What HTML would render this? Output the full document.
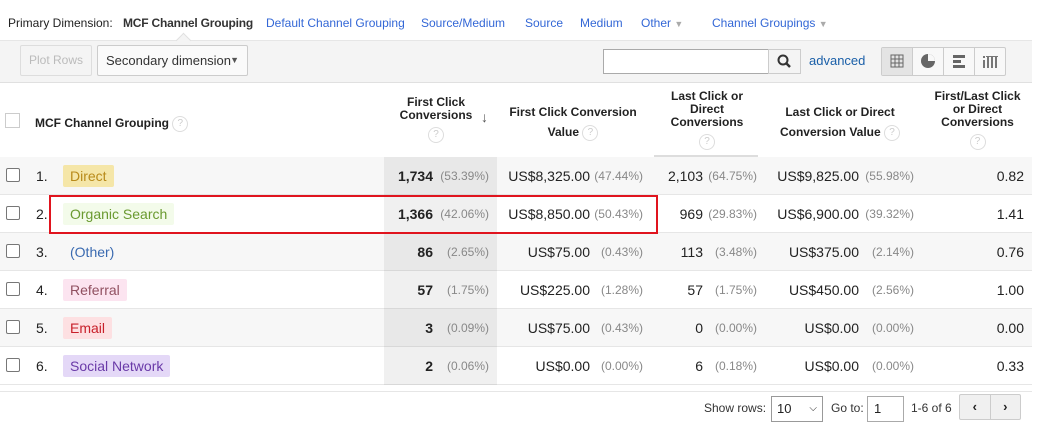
<!DOCTYPE html>
<html><head><style>
body{margin:0;width:1037px;height:422px;background:#fff;font-family:"Liberation Sans",Arial,sans-serif;position:relative;overflow:hidden;color:#222}
.a{position:absolute;white-space:nowrap}
.lnk{color:#3367d6;font-size:12px}
.hd{font-weight:bold;font-size:12px;text-align:center;color:#222;line-height:13px}
.q{display:inline-block;width:14px;height:14px;border:1px solid #ddd;border-radius:50%;color:#ccc;font-size:10px;line-height:14px;text-align:center;font-weight:normal;vertical-align:middle}
.row{position:absolute;left:0;width:1032px;height:37px;border-bottom:1px solid #e6e6e6}
.cb{position:absolute;left:6px;top:11px;width:12px;height:12px;border:1px solid #777;border-radius:2px;background:#fff}
.n{position:absolute;left:36px;top:11px;font-size:14px;color:#222}
.chip{position:absolute;left:63px;top:8px;height:22px;line-height:22px;padding:0 7px;font-size:14px;border-radius:2px}
.v{position:absolute;top:11px;font-size:14px;color:#222}
.p{position:absolute;top:12px;font-size:12px;color:#888}
.b{font-weight:bold}
</style></head><body>
<div class="a" style="left:8px;top:16px;font-size:12px;color:#222">Primary Dimension:</div>
<div class="a" style="left:123px;top:16px;font-size:12px;font-weight:bold;color:#333;letter-spacing:-0.2px">MCF Channel Grouping</div>
<div class="a lnk" style="left:266px;top:16px">Default Channel Grouping</div>
<div class="a lnk" style="left:421px;top:16px">Source/Medium</div>
<div class="a lnk" style="left:525px;top:16px">Source</div>
<div class="a lnk" style="left:580px;top:16px">Medium</div>
<div class="a lnk" style="left:641px;top:16px">Other <span style="color:#aaa;font-size:9px">▼</span></div>
<div class="a lnk" style="left:712px;top:16px">Channel Groupings <span style="color:#aaa;font-size:9px">▼</span></div>
<div class="a" style="left:0;top:40px;width:1032px;height:41px;background:#f4f4f4;border-top:1px solid #e6e6e6;border-bottom:1px solid #e0e0e0"></div>
<div class="a" style="left:178px;top:35px;width:10px;height:10px;background:#f4f4f4;border-left:1px solid #e0e0e0;border-top:1px solid #e0e0e0;transform:rotate(45deg)"></div>
<div class="a" style="left:20px;top:45px;width:70px;height:29px;border:1px solid #ddd;border-radius:2px;color:#bbb;font-size:12px;line-height:29px;text-align:center">Plot Rows</div>
<div class="a" style="left:97px;top:45px;width:151px;height:31px;border:1px solid #ccc;border-radius:2px;background:#fafafa;font-size:13px;line-height:29px;color:#333;padding-left:8px;box-sizing:border-box">Secondary dimension<span style="position:absolute;right:8px;color:#555;font-size:9px">▼</span></div>
<div class="a" style="left:603px;top:49px;width:166px;height:23px;border:1px solid #aaa;background:#fff"></div>
<div class="a" style="left:768px;top:49px;width:31px;height:23px;border:1px solid #ccc;background:#f4f4f4"><svg width="31" height="23"><circle cx="14" cy="10" r="4.5" fill="none" stroke="#333" stroke-width="2"/><line x1="17" y1="13" x2="21" y2="17" stroke="#333" stroke-width="2.5"/></svg></div>
<div class="a" style="left:809px;top:53px;font-size:13px;color:#1a5fa8">advanced</div>
<div class="a" style="left:881px;top:47px;width:123px;height:27px;border:1px solid #ccc;border-radius:2px;background:#f8f8f8;display:flex">
<div style="width:30px;background:#e4e4e4;border-right:1px solid #ccc"><svg width="30" height="27"><g stroke="#666" fill="none"><rect x="9" y="7" width="12" height="12"/><path d="M13 7v12M17 7v12M9 11h12M9 15h12"/></g></svg></div>
<div style="width:30px;border-right:1px solid #ccc"><svg width="30" height="27"><circle cx="15" cy="13" r="7" fill="#666"/><path d="M15 13V6a7 7 0 0 1 7 7z" fill="#f8f8f8"/></svg></div>
<div style="width:30px;border-right:1px solid #ccc"><svg width="30" height="27"><g fill="#666"><rect x="9" y="7" width="12" height="3"/><rect x="9" y="12" width="8" height="3"/><rect x="9" y="17" width="12" height="3"/></g></svg></div>
<div style="width:30px"><svg width="30" height="27"><g fill="#777"><rect x="8" y="8" width="2" height="2"/><rect x="8" y="12" width="2" height="8"/><rect x="12" y="8" width="2" height="12"/><rect x="16" y="8" width="2" height="12"/><rect x="20" y="8" width="2" height="12"/><rect x="11" y="8" width="12" height="1"/></g></svg></div>
</div>
<div class="a" style="left:0;top:82px;width:1032px;height:75px;border-bottom:1px solid #ddd"></div>
<div class="a" style="left:5px;top:113px;width:13px;height:13px;border:1px solid #ccc;background:#fff"></div>
<div class="a hd" style="left:35px;top:116px">MCF Channel Grouping <span class="q">?</span></div>
<div class="a hd" style="left:396px;top:96px;width:80px">First Click<br>Conversions<br><span class="q" style="margin-top:5px">?</span></div>
<div class="a" style="left:481px;top:109px;font-size:14px;color:#555;font-weight:bold">↓</div>
<div class="a hd" style="left:503px;top:102px;width:140px;line-height:20px">First Click Conversion<br>Value <span class="q">?</span></div>
<div class="a hd" style="left:655px;top:90px;width:104px">Last Click or<br>Direct<br>Conversions<br><span class="q" style="margin-top:5px">?</span></div>
<div class="a" style="left:654px;top:155px;width:104px;height:2px;background:#ddd"></div>
<div class="a hd" style="left:770px;top:102px;width:140px;line-height:20px">Last Click or Direct<br>Conversion Value <span class="q">?</span></div>
<div class="a hd" style="left:925px;top:90px;width:105px">First/Last Click<br>or Direct<br>Conversions<br><span class="q" style="margin-top:5px">?</span></div>

<div class="row" style="top:157px;background:#f7f7f7"><div class="cb"></div><div class="n">1.</div><div class="chip" style="background:#f5e6a8;color:#b88a1a">Direct</div></div>
<div class="row" style="top:195px"><div class="cb"></div><div class="n">2.</div><div class="chip" style="background:#f3fbea;color:#6a9a30">Organic Search</div></div>
<div class="row" style="top:233px;background:#f7f7f7"><div class="cb"></div><div class="n">3.</div><div class="chip" style="color:#3a6ab0">(Other)</div></div>
<div class="row" style="top:271px"><div class="cb"></div><div class="n">4.</div><div class="chip" style="background:#fce4f0;color:#905060">Referral</div></div>
<div class="row" style="top:309px;background:#f7f7f7"><div class="cb"></div><div class="n">5.</div><div class="chip" style="background:#fde0e2;color:#c8202a">Email</div></div>
<div class="row" style="top:347px"><div class="cb"></div><div class="n">6.</div><div class="chip" style="background:#e4d8f7;color:#6a3aa8">Social Network</div></div>
<div class="a" style="left:384px;top:157px;width:113px;height:228px;background:rgba(0,0,0,0.06)"></div>

<div id="vals"></div>
<div class="a" style="left:49px;top:195px;width:605px;height:35px;border:2px solid #e0141e"></div>

<div class="a" style="left:0;top:391px;width:1032px;border-top:1px solid #e6e6e6"></div>
<div class="a" style="left:704px;top:401px;font-size:12px;color:#333">Show rows:</div>
<div class="a" style="left:771px;top:396px;width:52px;height:26px;border:1px solid #999;background:#fff;font-size:13px;line-height:24px;padding-left:5px;box-sizing:border-box">10 <span style="position:absolute;right:5px;font-size:10px">&#x2335;</span></div>
<div class="a" style="left:831px;top:401px;font-size:12px;color:#333">Go to:</div>
<div class="a" style="left:867px;top:396px;width:37px;height:26px;border:1px solid #aaa;box-sizing:border-box;font-size:13px;line-height:24px;padding-left:6px">1</div>
<div class="a" style="left:911px;top:401px;font-size:12px;color:#333">1-6 of 6</div>
<div class="a" style="left:959px;top:394px;width:60px;height:24px;border:1px solid #ccc;border-radius:2px;background:#f0f0f0;display:flex;font-weight:bold;font-size:13px;line-height:24px;text-align:center"><div style="width:30px;border-right:1px solid #ccc">&lsaquo;</div><div style="width:30px">&rsaquo;</div></div>

<script>
var d=[["1,734","(53.39%)","US$8,325.00","(47.44%)","2,103","(64.75%)","US$9,825.00","(55.98%)","0.82"],
["1,366","(42.06%)","US$8,850.00","(50.43%)","969","(29.83%)","US$6,900.00","(39.32%)","1.41"],
["86","(2.65%)","US$75.00","(0.43%)","113","(3.48%)","US$375.00","(2.14%)","0.76"],
["57","(1.75%)","US$225.00","(1.28%)","57","(1.75%)","US$450.00","(2.56%)","1.00"],
["3","(0.09%)","US$75.00","(0.43%)","0","(0.00%)","US$0.00","(0.00%)","0.00"],
["2","(0.06%)","US$0.00","(0.00%)","6","(0.18%)","US$0.00","(0.00%)","0.33"]];
var R=[1037-433,1037-489,1037-590,1037-643,1037-703,1037-757,1037-859,1037-914,1037-1024];
var h="";
d.forEach(function(r,i){var t=157+i*38;
r.forEach(function(v,j){var c=(j==8)?"v":(j%2?"p":"v");h+='<div class="a '+c+(j==0?' b':'')+'" style="right:'+R[j]+'px;top:'+(t+(c=="p"?12:11))+'px">'+v+'</div>';});});
document.getElementById("vals").innerHTML=h;
</script>
</body></html>
